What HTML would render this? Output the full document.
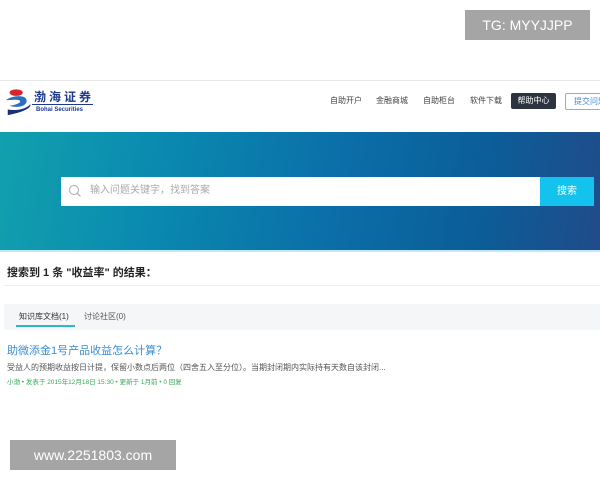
<!DOCTYPE html>
<html><head><meta charset="utf-8"><style>
*{margin:0;padding:0;box-sizing:border-box}
body{width:600px;height:480px;background:#fff;position:relative;overflow:hidden;font-family:"Liberation Sans","Noto Sans CJK SC",sans-serif}
.abs{position:absolute;line-height:1}
</style></head><body>
<div class="abs" style="left:0;top:80px;width:600px;height:1px;background:#e6e6e6"></div>
<!-- logo -->
<svg class="abs" style="left:4px;top:87px" width="30" height="30" viewBox="0 0 32 32">
<ellipse cx="13" cy="6" rx="7" ry="3.5" fill="#d6262b"/>
<path d="M2 14 C10 8 26 8 24 16 C22 22 12 22 6 20 C14 19 20 16 16 14 C12 13 6 14 2 14Z" fill="#2a6fc0"/>
<path d="M4 30 C14 28 30 24 28 18 C26 22 16 26 4 24Z" fill="#1a2f7a"/>
</svg>
<div class="abs" style="left:34px;top:91px;font-size:12px;font-weight:bold;color:#1d3a8f;letter-spacing:3px">渤海证券</div>
<div class="abs" style="left:32px;top:104px;width:61px;height:1px;background:#1d3a8f"></div>
<div class="abs" style="left:36px;top:107px;font-size:6px;font-weight:bold;color:#1d3a8f">Bohai Securities</div>
<div class="abs" style="left:330px;top:97px;font-size:8px;color:#444">自助开户</div>
<div class="abs" style="left:376px;top:97px;font-size:8px;color:#444">金融商城</div>
<div class="abs" style="left:423px;top:97px;font-size:8px;color:#444">自助柜台</div>
<div class="abs" style="left:470px;top:97px;font-size:8px;color:#444">软件下载</div>
<div class="abs" style="left:511px;top:93px;width:45px;height:16px;background:#2d3440;border-radius:2px;color:#fff;font-size:8px;line-height:16px;text-align:center">帮助中心</div>
<div class="abs" style="left:565px;top:93px;width:45px;height:17px;border:1px solid #7fb3e0;border-radius:2px;color:#4a8ad0;font-size:8px;line-height:15px;padding-left:8px">提交问题</div>
<!-- banner -->
<div class="abs" style="left:0;top:132px;width:600px;height:119px;background:linear-gradient(100deg,#12a0ad 0%,#0a8bb0 25%,#0b6fa8 55%,#0b5d98 80%,#214b8a 100%)"></div>
<div class="abs" style="left:0;top:250px;width:600px;height:2px;background:#bfe9f5"></div>
<div class="abs" style="left:61px;top:177px;width:479px;height:29px;background:#fff"></div>
<svg class="abs" style="left:68px;top:184px" width="14" height="14" viewBox="0 0 14 14"><circle cx="6" cy="6" r="4.5" stroke="#aaa" stroke-width="1" fill="none"/><path d="M9.3 9.3 L12.5 12.5" stroke="#aaa" stroke-width="1.2"/></svg>
<div class="abs" style="left:90px;top:186px;font-size:10px;color:#aaa">输入问题关键字，找到答案</div>
<div class="abs" style="left:540px;top:177px;width:54px;height:29px;background:#14c2ee;color:#fff;font-size:10px;line-height:29px;text-align:center">搜索</div>
<!-- results -->
<div class="abs" style="left:7px;top:268px;font-size:11px;font-weight:bold;color:#222">搜索到 1 条 "收益率" 的结果：</div>
<div class="abs" style="left:4px;top:285px;width:596px;height:1px;background:#eee"></div>
<div class="abs" style="left:4px;top:304px;width:596px;height:26px;background:#f5f6f7"></div>
<div class="abs" style="left:19px;top:313px;font-size:8px;color:#333">知识库文档(1)</div>
<div class="abs" style="left:16px;top:325px;width:59px;height:2px;background:#2fb5cc"></div>
<div class="abs" style="left:84px;top:313px;font-size:8px;color:#555">讨论社区(0)</div>
<div class="abs" style="left:7px;top:346px;font-size:11px;color:#3b8ed3">助微添金1号产品收益怎么计算？</div>
<div class="abs" style="left:7px;top:364px;font-size:8px;color:#555;white-space:nowrap">受益人的预期收益按日计提，保留小数点后两位（四舍五入至分位）。当期封闭期内实际持有天数自该封闭...</div>
<div class="abs" style="left:7px;top:380px;font-size:6.5px;color:#3aa95a;white-space:nowrap">小渤 • 发表于 2015年12月18日 15:30 • 更新于 1月前 • 0 回复</div>
<!-- overlays -->
<div class="abs" style="left:465px;top:10px;width:125px;height:30px;background:#a5a5a5;color:#fff;font-size:14px;line-height:30px;text-align:center">TG: MYYJJPP</div>
<div class="abs" style="left:10px;top:440px;width:166px;height:30px;background:#a5a5a5;color:#fff;font-size:14px;line-height:30px;text-align:center">www.2251803.com</div>
</body></html>
